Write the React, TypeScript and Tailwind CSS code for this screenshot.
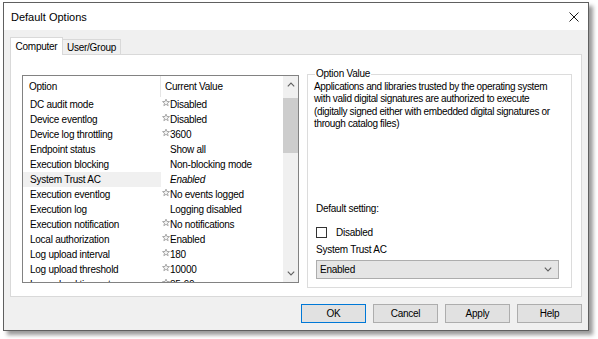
import React from "react";

type Row = { name: string; value: string; star?: boolean; italic?: boolean };

const ROWS: Row[] = [
  { name: "DC audit mode", value: "Disabled", star: true },
  { name: "Device eventlog", value: "Disabled", star: true },
  { name: "Device log throttling", value: "3600", star: true },
  { name: "Endpoint status", value: "Show all" },
  { name: "Execution blocking", value: "Non-blocking mode" },
  { name: "System Trust AC", value: "Enabled", italic: true },
  { name: "Execution eventlog", value: "No events logged", star: true },
  { name: "Execution log", value: "Logging disabled" },
  { name: "Execution notification", value: "No notifications", star: true },
  { name: "Local authorization", value: "Enabled", star: true },
  { name: "Log upload interval", value: "180", star: true },
  { name: "Log upload threshold", value: "10000", star: true },
  { name: "Log upload timeout", value: "85-90", star: true },
];

const SELECTED = "System Trust AC";

function Star() {
  return (
    <svg width="9" height="9" viewBox="0 0 10 10" className="mt-[-5px]">
      <path
        d="M5 0.8 L6.2 3.7 L9.3 3.9 L6.9 5.9 L7.7 9 L5 7.3 L2.3 9 L3.1 5.9 L0.7 3.9 L3.8 3.7 Z"
        fill="#f4f4f4"
        stroke="#8c8c8c"
        strokeWidth="0.9"
        strokeLinejoin="round"
      />
    </svg>
  );
}

function Chevron({ up = false }: { up?: boolean }) {
  return (
    <svg width="8" height="5" viewBox="0 0 8 5">
      <path
        d={up ? "M0.8 4.3 L4 1 L7.2 4.3" : "M0.8 0.7 L4 4 L7.2 0.7"}
        fill="none"
        stroke="#606060"
        strokeWidth="1.1"
      />
    </svg>
  );
}

function OptionList() {
  return (
    <div className="w-[277px] h-[208px] mt-[20px] border border-[#828282] bg-white flex shrink-0">
      <div className="flex-1 flex flex-col overflow-hidden">
        <div className="h-[21px] shrink-0 grid grid-cols-[138px_1fr] items-center">
          <div className="pl-[6px] border-r border-[#e5e5e5] h-full flex items-center">Option</div>
          <div className="pl-[4px]">Current Value</div>
        </div>
        {ROWS.map((r) => (
          <div key={r.name} className="h-[15px] shrink-0 grid grid-cols-[138px_1fr] items-center">
            <div
              className={`pl-[7px] h-full flex items-center whitespace-nowrap ${
                r.name === SELECTED ? "bg-[#f0f0f0]" : ""
              }`}
            >
              {r.name}
            </div>
            <div className="flex items-center h-full whitespace-nowrap">
              <span className="w-[9px] flex justify-center pl-[1px]">{r.star && <Star />}</span>
              <span className={r.italic ? "italic" : ""}>{r.value}</span>
            </div>
          </div>
        ))}
      </div>
      <div className="w-[15px] bg-[#f0f0f0] flex flex-col items-center">
        <div className="h-[17px] flex items-center justify-center">
          <Chevron up />
        </div>
        <div className="w-[15px] h-[55px] mt-[5px] bg-[#cdcdcd]" />
        <div className="flex-1" />
        <div className="h-[17px] flex items-center justify-center">
          <Chevron />
        </div>
      </div>
    </div>
  );
}

function OptionValue() {
  return (
    <div className="relative w-[265px] h-[214px] mt-[19px] ml-[8px] border border-[#dcdcdc] flex flex-col px-[8px] pb-[8px]">
      <span className="absolute left-[7px] top-[-7px] bg-white px-[1px] leading-[12px]">Option Value</span>
      <div className="pt-[6px] -ml-[2px] leading-[12.3px] tracking-[-0.35px] whitespace-nowrap">
        Applications and libraries trusted by the operating system
        <br />
        with valid digital signatures are authorized to execute
        <br />
        (digitally signed either with embedded digital signatures or
        <br />
        through catalog files)
      </div>
      <div className="mt-auto flex flex-col">
        <div className="leading-[12px] h-[12px]">Default setting:</div>
        <div className="mt-[11px] h-[12px] flex items-center">
          <span className="w-[11px] h-[11px] border border-[#333333] bg-white" />
          <span className="ml-[9px]">Disabled</span>
        </div>
        <div className="mt-[6px] leading-[12px] h-[12px]">System Trust AC</div>
        <div className="mt-[4px] w-[243px] h-[19px] border border-[#adadad] bg-[#e5e5e5] flex items-center justify-between pl-[3px] pr-[6px]">
          <span>Enabled</span>
          <Chevron />
        </div>
      </div>
    </div>
  );
}

function DialogButton({ label, primary = false }: { label: string; primary?: boolean }) {
  return (
    <button
      className={`w-[65px] h-[19px] bg-[#e1e1e1] border flex items-center justify-center ${
        primary ? "border-[#0078d7]" : "border-[#adadad]"
      }`}
    >
      {label}
    </button>
  );
}

export default function App() {
  return (
    <div className="w-[598px] h-[339px] bg-white pl-[3px] pt-[2px] font-['Liberation_Sans',Arial,sans-serif] text-[10px] tracking-[-0.25px] text-black">
      <div className="w-[586px] h-[329px] border border-[#5f5f5f] flex flex-col shadow-[4px_4px_4px_rgba(0,0,0,0.4)]">
        <div className="h-[27px] shrink-0 bg-white flex items-center justify-between pl-[7px] pr-[9px] pt-[1px]">
          <span className="text-[11px] tracking-normal">Default Options</span>
          <svg width="10" height="10" viewBox="0 0 10 10">
            <path d="M0.5 0.5 L9.5 9.5 M9.5 0.5 L0.5 9.5" stroke="#1a1a1a" strokeWidth="1" />
          </svg>
        </div>
        <div className="flex-1 bg-[#f0f0f0] flex flex-col px-[6px] pt-[7px] pb-[7px]">
          <div className="h-[17px] flex items-end shrink-0">
            <div className="w-[53px] h-[18px] -mb-px z-10 bg-white border border-b-0 border-[#d9d9d9] flex items-center justify-center">
              Computer
            </div>
            <div className="w-[58px] h-[15px] bg-[#f0f0f0] border border-l-0 border-b-0 border-[#d9d9d9] flex items-center justify-center">
              User/Group
            </div>
          </div>
          <div className="h-[243px] shrink-0 bg-white border border-[#d9d9d9] flex items-start pl-[11px]">
            <OptionList />
            <OptionValue />
          </div>
          <div className="mt-[7px] flex justify-end gap-[7px]">
            <DialogButton label="OK" primary />
            <DialogButton label="Cancel" />
            <DialogButton label="Apply" />
            <DialogButton label="Help" />
          </div>
        </div>
      </div>
    </div>
  );
}
